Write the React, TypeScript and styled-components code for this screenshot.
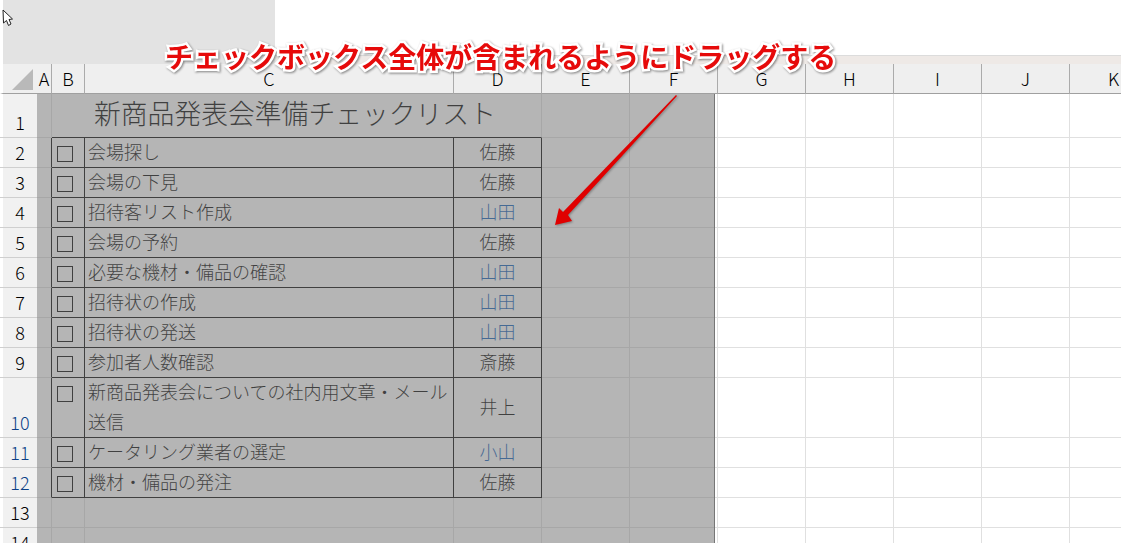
import styled, { createGlobalStyle } from 'styled-components';

const GlobalStyle = createGlobalStyle`
  html, body {
    margin: 0;
    padding: 0;
    background: #fff;
  }
  body {
    font-family: 'Noto Sans CJK JP', 'Noto Sans', sans-serif;
    color: #000;
  }
`;

const Page = styled.div`
  position: relative;
  width: 1121px;
  height: 543px;
  overflow: hidden;
  background: #fff;
`;

const TopBand = styled.div`
  display: flex;
  height: 64px;
  padding-left: 3px;
  box-sizing: border-box;
`;

const RibbonPanel = styled.div`
  width: 272px;
  background: #e3e3e3;
`;

const RibbonRest = styled.div`
  flex: 1;
  display: flex;
  flex-direction: column;
  justify-content: flex-end;
`;

const RibbonEdge = styled.div`
  height: 8px;
  background: #eee9e6;
  border-top: 1px solid #dcdcdc;
`;

const Sheet = styled.div`
  position: relative;
  display: grid;
  grid-template-columns: 37px 15px 33px 369px repeat(8, 88px);
  grid-template-rows: 30px 44px repeat(8, 30px) 60px repeat(4, 30px);
  width: 1121px;
  overflow: hidden;
`;

const Corner = styled.div`
  position: relative;
  background: #efefef;
  border-bottom: 1px solid #a0a0a0;
  border-left: 3px solid #fff;
  box-sizing: border-box;
  &::after {
    content: '';
    position: absolute;
    left: 9px;
    top: 5px;
    width: 21px;
    height: 21px;
    background: #b9b9b9;
    clip-path: polygon(100% 0, 100% 100%, 0 100%);
  }
`;

const ColHead = styled.div`
  background: #efefef;
  border-right: 1px solid #ababab;
  border-bottom: 1px solid #a0a0a0;
  box-sizing: border-box;
  font-size: 18px;
  font-weight: 300;
  line-height: 29px;
  text-align: center;
`;

const RowHead = styled.div<{ $blue?: boolean }>`
  display: flex;
  align-items: flex-end;
  justify-content: center;
  padding: 0 0 1px 3px;
  background: linear-gradient(90deg, #fff 3px, #f1f1f1 3px);
  border-bottom: 1px solid #cfcfcf;
  box-sizing: border-box;
  font-size: 18px;
  font-weight: 300;
  line-height: 28px;
  color: ${(p) => (p.$blue ? '#0b3f86' : '#000')};
`;

const Cell = styled.div<{ $darkRight?: boolean; $darkBottom?: boolean }>`
  display: flex;
  align-items: center;
  min-width: 0;
  box-sizing: border-box;
  background: #fff;
  border-right: 1px solid ${(p) => (p.$darkRight ? '#000' : '#e0e0e0')};
  border-bottom: 1px solid ${(p) => (p.$darkBottom ? '#000' : '#e0e0e0')};
  font-size: 18px;
  font-weight: 300;
`;

const TitleCell = styled(Cell)`
  grid-column: span 3;
  justify-content: center;
  font-size: 26.8px;
  padding: 0 3px 6px 0;
`;

const CheckCell = styled(Cell)`
  align-items: flex-start;
  padding: 8px 0 0 5px;
`;

const Checkbox = styled.span`
  display: block;
  width: 16px;
  height: 16px;
  border: 1.5px solid #000;
  box-sizing: border-box;
`;

const TaskCell = styled(Cell)`
  padding: 0 0 3px 3px;
  line-height: 30px;
  white-space: pre-line;
`;

const OwnerCell = styled(Cell)<{ $blue?: boolean }>`
  justify-content: center;
  padding-bottom: 3px;
  color: ${(p) => (p.$blue ? '#0d5cb8' : '#000')};
`;

// the dimmed rectangle that the drag is drawing over the sheet
const DragShade = styled.div`
  position: absolute;
  left: 37px;
  top: 30px;
  width: 678px;
  bottom: 0;
  box-sizing: border-box;
  background: rgba(118, 118, 118, 0.54);
  border-right: 1.5px solid #767676;
`;

const Callout = styled.div`
  position: absolute;
  left: 165px;
  top: 36px;
  font-size: 28px;
  font-weight: 700;
  line-height: 40px;
  white-space: nowrap;
  color: #e60a0a;
  -webkit-text-stroke: 5px #fff;
  paint-order: stroke fill;
  filter: drop-shadow(1px 1px 1px rgba(0, 0, 0, 0.45));
`;

const ArrowMark = styled.svg`
  position: absolute;
  left: 550px;
  top: 90px;
  filter: drop-shadow(1px 1px 1px rgba(0, 0, 0, 0.3));
`;

const Pointer = styled.svg`
  position: absolute;
  left: 2px;
  top: 9px;
`;

const columns = ['A', 'B', 'C', 'D', 'E', 'F', 'G', 'H', 'I', 'J', 'K'];
const blueRows = [10, 11, 12];

const tasks = [
  { no: 2, text: '会場探し', owner: '佐藤' },
  { no: 3, text: '会場の下見', owner: '佐藤' },
  { no: 4, text: '招待客リスト作成', owner: '山田', blue: true },
  { no: 5, text: '会場の予約', owner: '佐藤' },
  { no: 6, text: '必要な機材・備品の確認', owner: '山田', blue: true },
  { no: 7, text: '招待状の作成', owner: '山田', blue: true },
  { no: 8, text: '招待状の発送', owner: '山田', blue: true },
  { no: 9, text: '参加者人数確認', owner: '斎藤' },
  { no: 10, text: '新商品発表会についての社内用文章・メール\n送信', owner: '井上' },
  { no: 11, text: 'ケータリング業者の選定', owner: '小山', blue: true },
  { no: 12, text: '機材・備品の発注', owner: '佐藤' },
];

const blankCells = (count: number) =>
  Array.from({ length: count }, (_, i) => <Cell key={i} />);

export default function App() {
  return (
    <Page>
      <GlobalStyle />
      <TopBand>
        <RibbonPanel />
        <RibbonRest>
          <RibbonEdge />
        </RibbonRest>
      </TopBand>

      <Sheet>
        <Corner />
        {columns.map((c) => (
          <ColHead key={c}>{c}</ColHead>
        ))}

        <RowHead>1</RowHead>
        <Cell />
        <TitleCell $darkBottom>新商品発表会準備チェックリスト</TitleCell>
        {blankCells(7)}

        {tasks.map((t) => (
          <Row key={t.no} {...t} />
        ))}

        <RowHead>13</RowHead>
        {blankCells(11)}
        <RowHead>14</RowHead>
        {blankCells(11)}

        <DragShade />
      </Sheet>

      <Callout>チェックボックス全体が含まれるようにドラッグする</Callout>

      <ArrowMark width="130" height="140" viewBox="550 90 130 140">
        <path d="M676 95 L677 96 L568 215 L572 221 L555 225 L559 208 L563 212 Z" fill="#e00000" />
      </ArrowMark>

      <Pointer width="12" height="18" viewBox="0 0 12 18">
        <path
          d="M1 1 L10.5 10 L7 10.5 L9 15 L6.5 16.5 L4.5 11.5 L1.5 14 Z"
          fill="#fff"
          stroke="#222"
          strokeWidth="1"
        />
      </Pointer>
    </Page>
  );
}

function Row({ no, text, owner, blue }: { no: number; text: string; owner: string; blue?: boolean }) {
  return (
    <>
      <RowHead $blue={blueRows.includes(no)}>{no}</RowHead>
      <Cell $darkRight />
      <CheckCell $darkRight $darkBottom>
        <Checkbox />
      </CheckCell>
      <TaskCell $darkRight $darkBottom>
        <span>{text}</span>
      </TaskCell>
      <OwnerCell $darkRight $darkBottom $blue={blue}>
        {owner}
      </OwnerCell>
      {blankCells(7)}
    </>
  );
}
